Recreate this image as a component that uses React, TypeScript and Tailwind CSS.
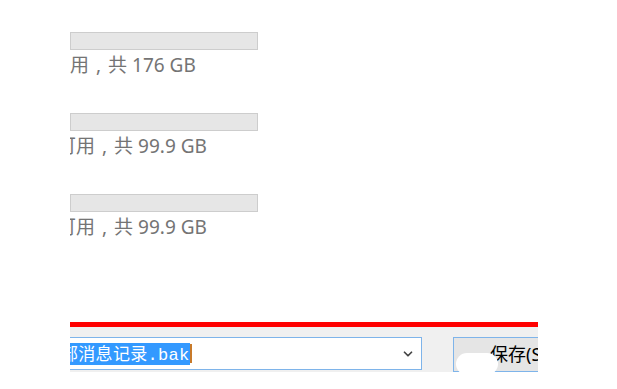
import { ChevronDown } from "lucide-react";

const drives = [
  { total: "176 GB", shift: "-ml-[19px]" },
  { total: "99.9 GB", shift: "-ml-[13px]" },
  { total: "99.9 GB", shift: "-ml-[13px]" },
];

const DriveRow = ({ total, shift }: { total: string; shift: string }) => (
  <div className="flex flex-col h-[81px]">
    <div className="w-[188px] h-[18px] bg-[#e6e6e6] border border-[#cdcdcd]" />
    <div className="w-[200px] overflow-hidden mt-[2px]">
      <div
        className={`whitespace-nowrap text-[19px] leading-[26px] text-[#747474] ${shift}`}
        style={{ fontFamily: '"Noto Sans", "Noto Sans CJK SC", sans-serif' }}
      >
        可用<span className="mx-[7px]">,</span>共 {total}
      </div>
    </div>
  </div>
);

export default function App() {
  return (
    <div
      className="w-[617px] h-[389px] bg-white overflow-hidden relative"
      style={{ fontFamily: '"Noto Sans", "Noto Sans CJK SC", sans-serif' }}
    >
      <div className="pl-[70px] pt-[32px] flex flex-col">
        {drives.map((d, i) => (
          <DriveRow key={i} total={d.total} shift={d.shift} />
        ))}
      </div>

      <div className="absolute left-[70px] top-[322px] w-[468px]">
        <div className="h-[5px] bg-[#ff0000]" />
        <div className="bg-[#f0f0f0] h-[45px] pt-[10px] flex">
          <div className="w-[352px] h-[33px] bg-white border border-l-0 border-[#7eb4ea] flex items-center overflow-hidden">
            <span
              className="bg-[#3399ff] text-white text-[17px] leading-[19px] whitespace-nowrap -ml-[9px] tracking-[0.3px]"
              style={{ fontFamily: '"Noto Sans CJK SC", monospace' }}
            >
              部消息记录
              <span style={{ fontFamily: '"Liberation Mono", monospace' }}>.bak</span>
            </span>
            <span className="w-[2px] h-[19px] bg-[#c87a2a]" />
            <span className="flex-1" />
            <ChevronDown className="w-[14px] h-[14px] text-[#444] mr-[6px]" strokeWidth={3} />
          </div>
          <div className="ml-[31px] flex-1 h-[35px] bg-[#e5e5e5] border border-r-0 border-[#7eb4ea] pl-[36px] flex items-center overflow-hidden">
            <span className="text-[18px] text-black whitespace-nowrap">保存(S)</span>
          </div>
        </div>
        <div className="absolute left-[386px] top-[31px] w-[42px] h-[22px] rounded-full bg-white" />
      </div>
    </div>
  );
}
